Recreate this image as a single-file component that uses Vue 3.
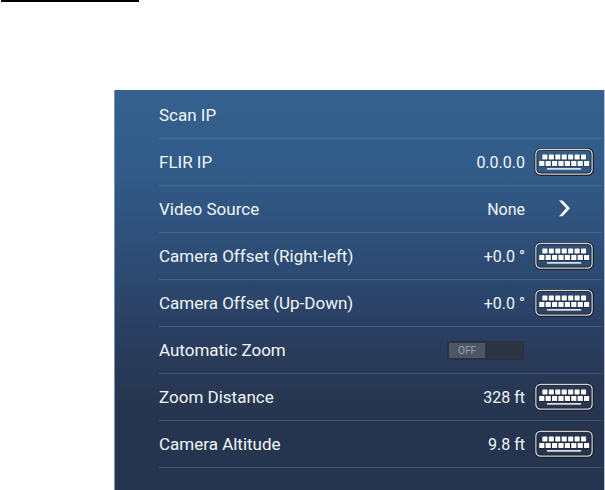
<template>
  <div class="page">
    <hr class="rule" />
    <main class="panel">
      <div v-for="row in rows" :key="row.id" class="row">
        <button v-if="row.type === 'action'" type="button" class="label action">{{ row.label }}</button>
        <label v-else class="label" :for="row.id">{{ row.label }}</label>

        <span v-if="row.value" class="value">{{ row.value }}</span>

        <span v-if="row.type === 'toggle'" class="switch">
          <input :id="row.id" v-model="autoZoom" type="checkbox" class="switch-input" />
          <span class="knob" :class="{ on: autoZoom }">{{ autoZoom ? 'ON' : 'OFF' }}</span>
        </span>

        <button v-if="row.type === 'keyboard'" :id="row.id" type="button" class="control">
          <svg width="60" height="28" viewBox="0 0 60 28" aria-hidden="true">
            <rect x="1.5" y="1" width="57.5" height="26" rx="5" fill="none" stroke="#1b2030" stroke-width="2" />
            <rect x="2" y="1.5" width="56" height="24.5" rx="4.5" fill="none" stroke="#d3d0ce" stroke-width="1.5" />
            <rect x="3" y="2.5" width="54" height="22.5" rx="3.5" fill="none" stroke="#1b2030" stroke-width="0.7" />
            <g fill="#10182a" opacity="0.5">
              <rect v-for="n in 7" :key="n" :x="1.9 + n * 6.45" y="6.8" width="6" height="5.6" />
              <rect v-for="n in 8" :key="n" :x="-1.2 + n * 6.4" y="13" width="6" height="5.8" />
            </g>
            <g fill="#fffdfa">
              <rect v-for="n in 7" :key="n" :x="1.9 + n * 6.45" y="6.6" width="5.1" height="4.8" rx="0.5" />
              <rect v-for="n in 8" :key="n" :x="-1.2 + n * 6.4" y="13" width="5.2" height="5" rx="0.5" />
              <rect x="12.8" y="20" width="34.5" height="1.8" rx="0.8" fill="#dedcdc" />
            </g>
          </svg>
        </button>

        <button v-if="row.type === 'select'" :id="row.id" type="button" class="control">
          <svg width="60" height="28" viewBox="0 0 60 28" aria-hidden="true">
            <path d="M25 5.6 h3.6 L36 13.2 L28.6 21.2 h-3.6 L32.2 13.2 Z" fill="#fff" />
          </svg>
        </button>
      </div>
    </main>
  </div>
</template>

<script setup>
import { ref } from 'vue'

const autoZoom = ref(false)

const rows = [
  { id: 'scan-ip', label: 'Scan IP', type: 'action' },
  { id: 'flir-ip', label: 'FLIR IP', type: 'keyboard', value: '0.0.0.0' },
  { id: 'video-source', label: 'Video Source', type: 'select', value: 'None' },
  { id: 'offset-x', label: 'Camera Offset (Right-left)', type: 'keyboard', value: '+0.0 °' },
  { id: 'offset-y', label: 'Camera Offset (Up-Down)', type: 'keyboard', value: '+0.0 °' },
  { id: 'auto-zoom', label: 'Automatic Zoom', type: 'toggle' },
  { id: 'zoom-distance', label: 'Zoom Distance', type: 'keyboard', value: '328 ft' },
  { id: 'altitude', label: 'Camera Altitude', type: 'keyboard', value: '9.8 ft' }
]
</script>

<style>
body {
  margin: 0;
  background: #fff;
}
</style>

<style scoped>
.page {
  display: flex;
  flex-direction: column;
  min-height: 100vh;
  font-family: Roboto, "Liberation Sans", sans-serif;
}

.rule {
  width: 138px;
  height: 2px;
  margin: 0 0 88px 1px;
  border: 0;
  background: #000;
}

.panel {
  flex: 1;
  box-sizing: border-box;
  margin-left: 114px;
  padding: 2px 2px 22px 44px;
  border-left: 1px solid #7c96b2;
  border-right: 1px solid #b4c0ce;
  background: linear-gradient(#34618f 0%, #315a87 22%, #2c4a72 45%, #293b5b 66%, #26354f 80%);
}

.row {
  display: flex;
  align-items: center;
  box-sizing: border-box;
  height: 47px;
  padding-right: 8px;
  border-bottom: 1px solid rgba(140, 175, 185, 0.25);
  color: #f1f5f8;
  font-size: 17px;
  line-height: 20px;
}

.label {
  flex: 1;
}

.action {
  padding: 0;
  border: 0;
  background: none;
  color: inherit;
  font: inherit;
  text-align: left;
  cursor: pointer;
}

.value {
  margin-right: 9px;
  padding-top: 2px;
  font-size: 16px;
}

.control {
  display: flex;
  padding: 0;
  border: 0;
  background: none;
  cursor: pointer;
}

.switch {
  position: relative;
  box-sizing: border-box;
  width: 77px;
  height: 19px;
  margin-right: 70px;
  padding: 1px;
  border: 1px solid #29313f;
  background: #2c3341;
}

.switch-input {
  position: absolute;
  inset: 0;
  width: 100%;
  height: 100%;
  margin: 0;
  opacity: 0;
  cursor: pointer;
}

.knob {
  display: block;
  width: 36px;
  background: #4b5666;
  color: #97a0ac;
  font-size: 10px;
  line-height: 15px;
  text-align: center;
}

.knob.on {
  margin-left: auto;
}
</style>
